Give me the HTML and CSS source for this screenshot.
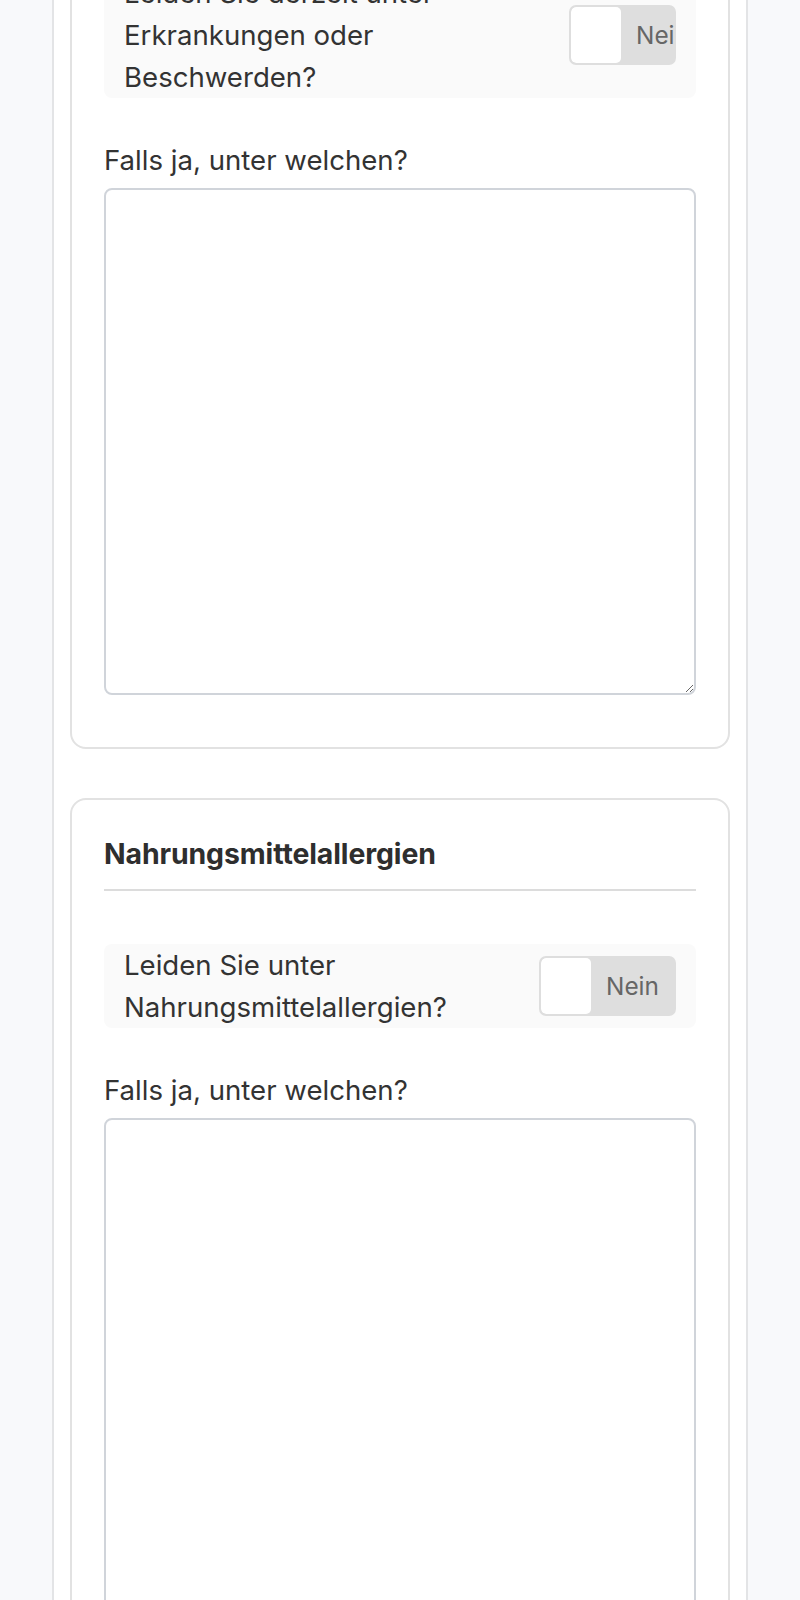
FILE: index.html
```html
<!DOCTYPE html>
<html lang="de">
<head>
<meta charset="utf-8">
<title>Gesundheitsfragebogen</title>
<link rel="stylesheet" href="styles.css">
</head>
<body>
<main class="shell">
  <section class="card">
    <div class="question">
      <span class="question__text">Leiden Sie derzeit unter Erkrankungen oder Beschwerden?</span>
      <label class="toggle toggle--tight">
        <span class="toggle__knob"></span>
        <span class="toggle__label">Nein</span>
      </label>
    </div>
    <div class="field">
      <label class="field__label" for="beschwerden">Falls ja, unter welchen?</label>
      <textarea class="field__input" id="beschwerden"></textarea>
    </div>
  </section>

  <section class="card">
    <h2 class="card__title">Nahrungsmittelallergien</h2>
    <div class="question">
      <span class="question__text">Leiden Sie unter Nahrungsmittelallergien?</span>
      <label class="toggle">
        <span class="toggle__knob"></span>
        <span class="toggle__label">Nein</span>
      </label>
    </div>
    <div class="field">
      <label class="field__label" for="allergien">Falls ja, unter welchen?</label>
      <textarea class="field__input field__input--tall" id="allergien"></textarea>
    </div>
  </section>
</main>
</body>
</html>
```

FILE: styles.css
```css
* {
  box-sizing: border-box;
}

body {
  margin: 0;
  background: #f8f9fb;
  font-family: Inter, "Noto Sans", sans-serif;
  color: #333333;
}

/* page column, scrolled down part-way into the form */
.shell {
  width: 696px;
  margin: -62px auto 0;
  padding: 0 16px;
  background: #ffffff;
  border-left: 2px solid #e3e4e6;
  border-right: 2px solid #e3e4e6;
  min-height: 1800px;
}

.card {
  border: 2px solid #e2e2e2;
  border-radius: 16px;
  padding: 32px 32px 32px;
  margin-bottom: 49px;
}

.card__title {
  margin: 0 0 53px;
  padding-bottom: 13px;
  border-bottom: 2px solid #dcdcdc;
  font-size: 28.4px;
  line-height: 44px;
  font-weight: 700;
  letter-spacing: -0.1px;
  color: #2e2e2e;
}

/* yes/no question row */
.question {
  display: flex;
  align-items: center;
  gap: 16px;
  padding: 0 20px;
  background: #fafafa;
  border-radius: 8px;
}

.question__text {
  flex: 1 1 auto;
  font-size: 27.6px;
  line-height: 42px;
}

.toggle {
  flex: 0 0 auto;
  display: flex;
  align-items: center;
  width: 137px;
  height: 60px;
  border: 2px solid #dedede;
  border-radius: 7px;
  background: #dedede;
  overflow: hidden;
  white-space: nowrap;
}

.toggle--tight {
  width: 107px;
}

.toggle__knob {
  flex: 0 0 50px;
  height: 56px;
  background: #ffffff;
  border-radius: 5px;
}

.toggle__label {
  padding-left: 15px;
  font-size: 24.4px;
  color: #666666;
}

.field {
  margin-top: 41px;
  margin-bottom: 20px;
}

.field__label {
  display: block;
  margin-bottom: 7px;
  font-size: 27.6px;
  line-height: 42px;
}

.field__input {
  display: block;
  width: 100%;
  height: 507px;
  border: 2px solid #d0d4da;
  border-radius: 8px;
  background: #ffffff;
  font: inherit;
  resize: vertical;
}

.field__input--tall {
  height: 600px;
}
```
